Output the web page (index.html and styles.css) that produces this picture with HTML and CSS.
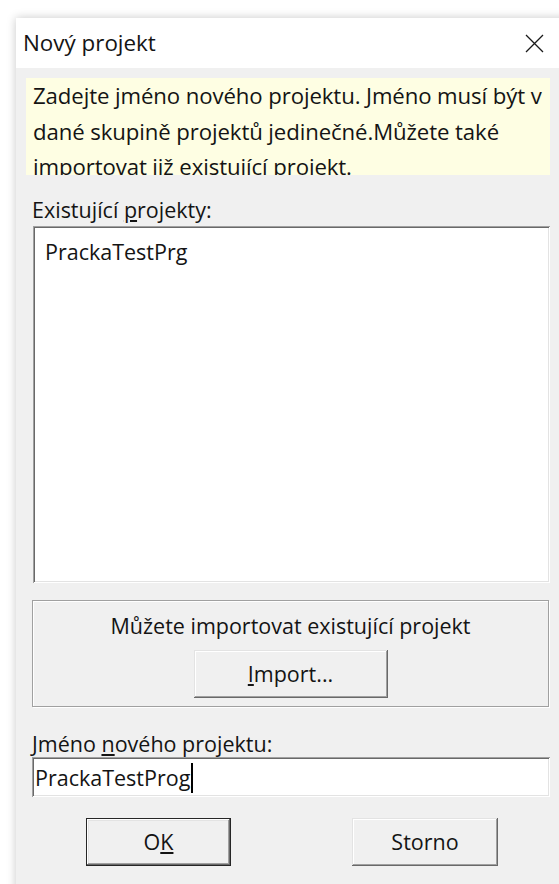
FILE: index.html
```html
<!DOCTYPE html>
<html lang="cs">
<head>
<meta charset="utf-8">
<title>Nový projekt</title>
<link rel="stylesheet" href="styles.css">
</head>
<body>
<div class="window">
  <header class="titlebar">
    <span class="title">Nový projekt</span>
    <svg class="close" width="19" height="19" viewBox="0 0 19 19" aria-label="Zavřít">
      <path d="M1 1 L18 18 M18 1 L1 18" stroke="#1a1a1a" stroke-width="1.3" fill="none"/>
    </svg>
  </header>
  <div class="content">
    <p class="hint">Zadejte jméno nového projektu. Jméno musí být v dané skupině projektů jedinečné.Můžete také importovat již existující projekt.</p>
    <div class="controls">
      <label class="label">Existující <u>p</u>rojekty:</label>
      <ul class="listbox">
        <li>PrackaTestPrg</li>
      </ul>
      <div class="group">
        <span class="group-text">Můžete importovat existující projekt</span>
        <button class="btn btn-import"><u>I</u>mport...</button>
      </div>
      <label class="label label-name">Jméno <u>n</u>ového projektu:</label>
      <div class="field">PrackaTestProg<span class="caret"></span></div>
      <div class="actions">
        <button class="btn btn-default">O<u>K</u></button>
        <button class="btn btn-cancel">Storno</button>
      </div>
    </div>
  </div>
</div>
</body>
</html>
```
FILE: styles.css
```css
html, body {
  margin: 0;
  height: 884px;
  overflow: hidden;
  background: #ffffff;
}

body {
  font-family: "Open Sans", "Noto Sans", sans-serif;
  font-size: 21.5px;
  color: #141414;
}

/* dialog frame, running past the right and bottom edges */
.window {
  margin: 18px 0 0 16px;
  width: 560px;
  height: 900px;
  background: #f0f0f0;
  box-shadow: 0 0 9px rgba(0, 0, 0, 0.22);
}

.titlebar {
  display: flex;
  align-items: center;
  justify-content: space-between;
  height: 50px;
  padding: 0 32px 0 7px;
  background: #ffffff;
}

.title {
  font-size: 22.4px;
  line-height: 30px;
}

.close {
  display: block;
}

.content {
  padding: 10px 26px 0 10px;
}

/* yellow info strip, clipped to three lines */
.hint {
  margin: 0;
  height: 97px;
  overflow: hidden;
  padding: 0 0 0 7px;
  background: #fefee3;
  font-size: 22.2px;
  letter-spacing: -0.1px;
  line-height: 35.5px;
}

.controls {
  padding-left: 6px;
}

.label {
  display: block;
  margin-top: 22px;
  line-height: 26px;
}

.label-name {
  margin-top: 24px;
}

/* sunken 3D edge shared by list and edit field */
.listbox,
.field {
  background: #ffffff;
  box-shadow:
    inset 1px 1px 0 #a0a0a0,
    inset -1px -1px 0 #ffffff,
    inset 2px 2px 0 #696969,
    inset -2px -2px 0 #e3e3e3;
}

.listbox {
  box-sizing: border-box;
  height: 357px;
  margin: 3px 0 0 1px;
  padding: 13px 12px;
  list-style: none;
  line-height: 26px;
}

.group {
  box-sizing: border-box;
  display: flex;
  flex-direction: column;
  align-items: center;
  height: 107px;
  margin: 17px 1px 0 0;
  padding-top: 12px;
  border: 1px solid #a0a0a0;
  box-shadow: inset 1px 1px 0 #ffffff, 1px 1px 0 #ffffff;
}

.group-text {
  line-height: 26px;
}

.btn {
  font: inherit;
  color: inherit;
  height: 48px;
  padding: 0;
  border: 0;
  background: #f0f0f0;
  line-height: 26px;
  box-shadow:
    inset -1px -1px 0 #696969,
    inset 1px 1px 0 #e3e3e3,
    inset -2px -2px 0 #a0a0a0,
    inset 2px 2px 0 #ffffff;
}

.btn-import {
  width: 194px;
  margin-top: 11px;
}

.field {
  box-sizing: border-box;
  height: 40px;
  padding: 6px 3px 4px;
  line-height: 26px;
  white-space: nowrap;
}

.caret {
  display: inline-block;
  width: 2px;
  height: 30px;
  margin-left: 1px;
  vertical-align: -7px;
  background: #000000;
}

.actions {
  display: flex;
  margin-top: 21px;
  padding-left: 54px;
  gap: 121px;
}

.btn-default {
  width: 145px;
  box-shadow:
    inset 0 0 0 1px #262626,
    inset -2px -2px 0 #696969,
    inset 2px 2px 0 #ffffff,
    inset -3px -3px 0 #a0a0a0,
    inset 3px 3px 0 #e3e3e3;
}

.btn-cancel {
  width: 146px;
}
```
